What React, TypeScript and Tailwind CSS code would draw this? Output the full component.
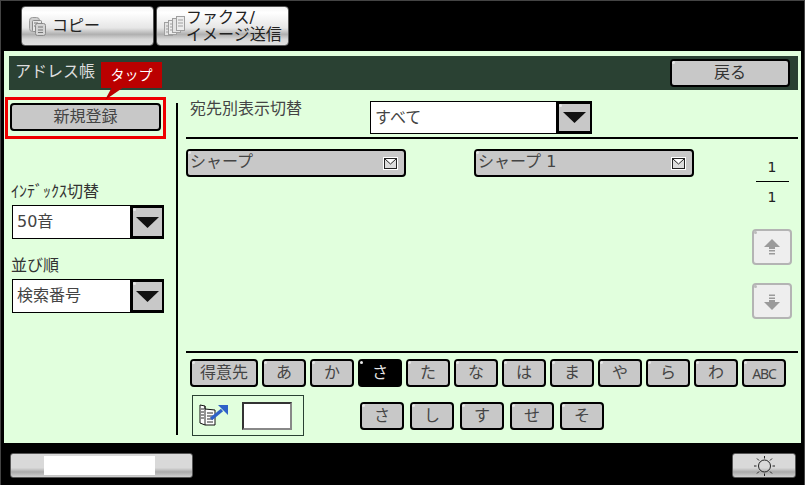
import React from "react";

const FONT = '"DejaVu Sans","Noto Sans CJK JP",sans-serif';

function Dot({ light }: { light?: boolean }) {
  return <span className={`absolute left-0 top-0 h-[3px] w-[3px] rounded-full ${light ? "bg-[#bbbbbb]" : "bg-[#e8e8e8]"}`} />;
}

function Key({ label, w, h = 28, active, sm }: { label: string; w: number; h?: number; active?: boolean; sm?: boolean }) {
  return (
    <div
      style={{ width: w, height: h }}
      className={`relative flex shrink-0 items-center justify-center rounded-[4px] border-[2px] border-black ${sm ? "font-['Noto_Sans'] text-[14px] tracking-[-1.2px]" : "text-[16px]"} ${active ? "bg-black text-[#e8e8e8]" : "bg-[#c8c8c8] text-[#444444]"}`}
    >
      <Dot />
      {label}
    </div>
  );
}

function Mail() {
  return (
    <svg width="15" height="13" viewBox="0 0 15 13" className="shrink-0">
      <rect x="0" y="0" width="15" height="13" fill="#ffffff" />
      <rect x="1.5" y="1.5" width="12" height="10" fill="#dcdcdc" stroke="#222222" />
      <path d="M2 2l5.5 5L13 2" fill="#ffffff" stroke="#222222" />
    </svg>
  );
}

function AddressBtn({ label }: { label: string }) {
  return (
    <div className="relative flex h-[28px] w-[220px] items-center justify-between rounded-[4px] border-[2px] border-black bg-[#c8c8c8] pl-[2px] pr-[6px] text-[16px] text-[#444444]">
      <Dot />
      <span className="-mt-[2px]">{label}</span>
      <Mail />
    </div>
  );
}

function Triangle() {
  return (
    <svg width="23" height="11" viewBox="0 0 23 11">
      <path d="M0 0H23L11.5 11Z" fill="#111111" />
    </svg>
  );
}

function Select({ label, w, h, btn }: { label: string; w: number; h: number; btn: number }) {
  return (
    <div style={{ width: w, height: h }} className="flex shrink-0 border border-black bg-white">
      <div className="flex flex-1 items-center pl-[4px] text-[16px] text-[#444444]">{label}</div>
      <div style={{ width: btn }} className="relative -my-px -mr-px flex shrink-0 items-center justify-center border-y-[3px] border-l-[3px] border-r-[2px] border-black bg-[#c8c8c8]">
        <span className="absolute left-0 top-0 h-[3px] w-[3px] rounded-full bg-[#e8e8e8]" />
        <Triangle />
      </div>
    </div>
  );
}

function ArrowBtn({ up }: { up?: boolean }) {
  return (
    <div className="relative flex h-[36px] w-[40px] items-center justify-center rounded-[4px] border-[2px] border-[#b4b4b4] bg-[#eeeeee]">
      <Dot light />
      <svg width="16" height="17" viewBox="0 0 16 17" className={up ? "" : "rotate-180"}>
        <path d="M8 0L16 8H11V10H5V8H0Z" fill="#9a9a9a" />
        <rect x="5" y="11" width="6" height="1.5" fill="#9a9a9a" />
        <rect x="5" y="14" width="6" height="1.5" fill="#9a9a9a" />
      </svg>
    </div>
  );
}

function CopyIcon() {
  return (
    <svg width="17" height="19" viewBox="0 0 17 19" className="shrink-0">
      <rect x="0.5" y="0.5" width="10" height="14" rx="3" fill="#cfcfcf" stroke="#9a9a9a" />
      <rect x="3.5" y="3.5" width="9" height="11" rx="1" fill="#e6e6e6" stroke="#8a8a8a" />
      <rect x="6.5" y="6.5" width="10" height="12" rx="2" fill="#d4d4d4" stroke="#8a8a8a" />
      <path d="M5 6h4M5 9h1M9 10h5M9 13h5M9 15.5h5" stroke="#777777" />
    </svg>
  );
}

function FaxIcon() {
  return (
    <svg width="21" height="20" viewBox="0 0 21 20" className="shrink-0">
      <rect x="0.5" y="6.5" width="8" height="13" fill="#e4e4e4" stroke="#a0a0a0" />
      <rect x="4.5" y="4.5" width="8" height="14" fill="#ececec" stroke="#a0a0a0" />
      <rect x="8.5" y="2.5" width="8" height="14" fill="#e4e4e4" stroke="#a0a0a0" />
      <rect x="12.5" y="0.5" width="8" height="14" fill="#ececec" stroke="#a0a0a0" />
      <path d="M14 4h5M14 7h5M14 10h5M2 10h2M2 13h2M2 16h2M6 8h2M6 11h2M6 14h2" stroke="#a0a0a0" />
    </svg>
  );
}

function BookArrow() {
  return (
    <svg width="30" height="23" viewBox="0 0 30 23" className="shrink-0">
      <path d="M1 1L6 2V5L16 6V21L6 21L1 19Z" fill="#ffffff" stroke="#111111" />
      <path d="M6 2V21M8 9h6M8 12h6M8 15h6M8 18h6M2 5h3M2 8h3M2 11h3M2 14h3" stroke="#111111" strokeWidth="0.9" />
      <path d="M12 15L23 6" stroke="#2f62c8" strokeWidth="3.5" />
      <path d="M19 1H29V11Z" fill="#2f62c8" />
    </svg>
  );
}

function Sun() {
  return (
    <svg width="21" height="20" viewBox="0 0 21 20">
      <circle cx="10.5" cy="10" r="6" fill="none" stroke="#222222" />
      <path d="M10.5 0V2.5M10.5 17.5V20M0 10H2.5M18.5 10H21M3 2.5L5 4.5M18 2.5L16 4.5M3 17.5L5 15.5M18 17.5L16 15.5" stroke="#222222" />
    </svg>
  );
}

const kana = ["あ", "か", "さ", "た", "な", "は", "ま", "や", "ら", "わ"];
const sub = ["さ", "し", "す", "せ", "そ"];
const tabBg = "bg-[linear-gradient(#f4f4f4_0%,#ffffff_15%,#e6e6e6_55%,#b0b0b0_72%,#d8d8d8_85%,#e0e0e0_100%)]";
const smallBg = "bg-[linear-gradient(#d9d9d9_0%,#d9d9d9_60%,#aaaaaa_78%,#d0d0d0_100%)]";

export default function App() {
  return (
    <div style={{ fontFamily: FONT }} className="relative flex h-[485px] w-[805px] flex-col overflow-hidden border-l-[1px] border-r-[1px] border-t-[1px] border-[#444444] bg-black">
      {/* tabs */}
      <div className="flex h-[50px] shrink-0 gap-[2px] pl-[20px] pt-[5px]">
        <div className={`flex h-[40px] w-[133px] items-center gap-[6px] rounded-[4px] border border-[#555555] pl-[7px] text-[16px] text-[#222222] ${tabBg}`}>
          <CopyIcon />
          <span>コピー</span>
        </div>
        <div className={`flex h-[40px] w-[133px] items-center gap-[1px] rounded-[4px] border border-[#555555] pl-[7px] text-[16px] leading-[17px] text-[#222222] ${tabBg}`}>
          <FaxIcon />
          <span className="whitespace-nowrap">
            ファクス/
            <br />
            イメージ送信
          </span>
        </div>
      </div>

      {/* panel */}
      <div className="ml-[3px] mr-[3px] flex h-[392px] w-[797px] shrink-0 flex-col bg-[#e1ffdd] pl-[5px] pr-[3px] pt-[5px]">
        <div className="flex h-[34px] shrink-0 items-center justify-between bg-[#2a4133] pl-[6px] pr-[8px] text-[16px] text-[#dddddd]">
          <span className="-mt-[3px]">アドレス帳</span>
          <div className="relative flex h-[28px] w-[120px] items-center justify-center rounded-[4px] border-[2px] border-black bg-[#c8c8c8] text-[16px] text-[#333333]">
            <Dot />
            戻る
          </div>
        </div>

        <div className="flex min-h-0 flex-1">
          {/* left */}
          <div className="flex w-[167px] shrink-0 flex-col pl-[1px] pt-[13px]">
            <div className="relative flex h-[28px] w-[151px] items-center justify-center rounded-[4px] border-[2px] border-black bg-[#c8c8c8] text-[16px] text-[#444444]">
              新規登録
            </div>
            <div className="ml-[1px] mt-[52px] h-[18px] whitespace-nowrap text-[16px] leading-[18px] text-[#333333]">ｲﾝﾃﾞｯｸｽ切替</div>
            <div className="ml-[2px] mt-[4px]">
              <Select label="50音" w={152} h={34} btn={34} />
            </div>
            <div className="ml-[1px] mt-[18px] h-[18px] text-[16px] leading-[18px] text-[#333333]">並び順</div>
            <div className="ml-[2px] mt-[4px]">
              <Select label="検索番号" w={152} h={34} btn={34} />
            </div>
          </div>

          {/* vertical rule */}
          <div className="mb-[8px] mt-[13px] w-[2px] shrink-0 bg-black" />

          {/* right */}
          <div className="ml-[8px] flex min-w-0 flex-1 flex-col">
            <div className="flex h-[49px] shrink-0 items-start border-b-[2px] border-black pt-[11px]">
              <div className="ml-[4px] mt-[-2px] w-[180px] text-[16px] leading-[20px] text-[#444444]">宛先別表示切替</div>
              <Select label="すべて" w={222} h={33} btn={36} />
            </div>

            <div className="flex h-[214px] shrink-0 border-b-[2px] border-black">
              <div className="flex flex-1 gap-[68px] pt-[10px]">
                <AddressBtn label="シャープ" />
                <AddressBtn label="シャープ 1" />
              </div>
              <div className="mr-[6px] flex w-[40px] shrink-0 flex-col items-center">
                <div className="mt-[19px] flex h-[18px] items-center text-[14px] text-[#222222]">1</div>
                <div className="mt-[5px] h-px w-[33px] bg-black" />
                <div className="mt-[6px] flex h-[18px] items-center text-[14px] text-[#222222]">1</div>
                <div className="mt-[23px]">
                  <ArrowBtn up />
                </div>
                <div className="mt-[18px]">
                  <ArrowBtn />
                </div>
              </div>
            </div>

            <div className="ml-[4px] mt-[6px] flex gap-[4px]">
              <Key label="得意先" w={68} h={28} />
              {kana.map((k) => (
                <Key key={k} label={k} w={44} h={28} active={k === "さ"} />
              ))}
              <Key label="ABC" w={44} h={28} sm />
            </div>

            <div className="ml-[6px] mt-[8px] flex items-center">
              <div className="flex h-[41px] w-[112px] shrink-0 items-center border border-[#2a4133] pl-[6px]">
                <BookArrow />
                <div className="ml-[13px] h-[28px] w-[50px] border-[2px] border-b-[#888888] border-l-[#333333] border-r-[#888888] border-t-[#333333] bg-white" />
              </div>
              <div className="ml-[56px] flex gap-[6px]">
                {sub.map((k) => (
                  <Key key={k} label={k} w={44} h={28} />
                ))}
              </div>
            </div>
          </div>
        </div>
      </div>

      {/* bottom */}
      <div className="flex flex-1 items-start justify-between pl-[9px] pr-[8px] pt-[10px]">
        <div className={`flex h-[25px] w-[183px] justify-center rounded-[3px] border border-[#555555] pr-[4px] pt-[2px] ${smallBg}`}>
          <div className="h-[19px] w-[111px] bg-white" />
        </div>
        <div className={`flex h-[25px] w-[64px] items-center justify-center rounded-[3px] border border-[#555555] ${smallBg}`}>
          <Sun />
        </div>
      </div>

      {/* tap callout overlay */}
      <div className="pointer-events-none absolute left-[4px] top-[96px] h-[42px] w-[161px] border-[3px] border-[#ee0000]" />
      <div className="absolute left-[100px] top-[61px] flex h-[26px] w-[61px] items-center justify-center bg-[#bb0000] text-[14px] text-white">タップ</div>
      <svg width="24" height="13" viewBox="0 0 24 13" className="absolute left-[103px] top-[86px]">
        <path d="M1 13L8 0H20Z" fill="#bb0000" />
      </svg>
    </div>
  );
}
